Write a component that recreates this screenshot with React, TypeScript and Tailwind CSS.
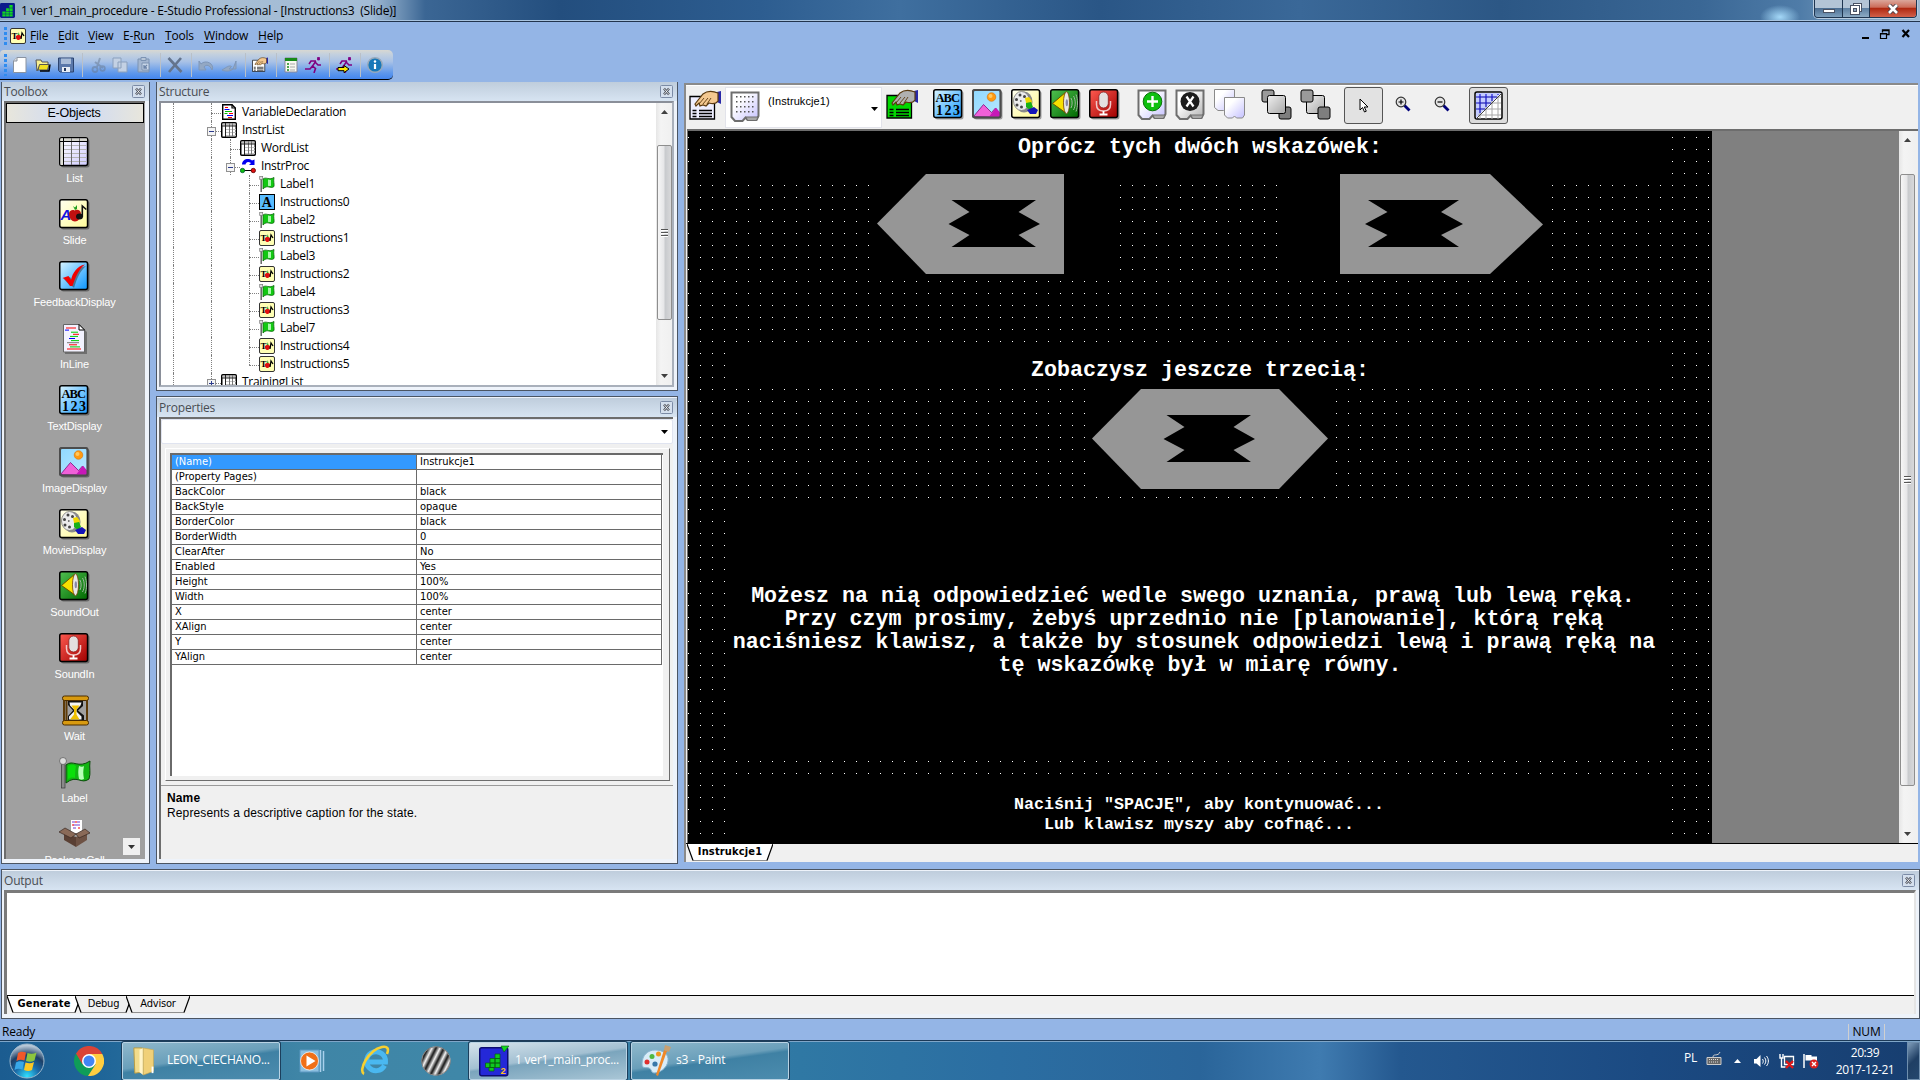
import React from "react";

type IconProps = { className?: string };
const UI = "font-['Open_Sans','Noto_Sans',sans-serif]";
const ARIAL = "font-['Liberation_Sans',sans-serif]";
const TAHOMA = "font-['DejaVu_Sans_Condensed','DejaVu_Sans',sans-serif]";

/* ---------- Object icons, 31 x 31 grid ---------- */

function Frame({ id, from, to, children, className = "size-[31px]", stroke = "#000" }: { id: string; from: string; to: string; children: React.ReactNode; className?: string; stroke?: string }) {
  return (
    <svg viewBox="0 0 31 31" className={className}>
      <defs>
        <linearGradient id={id} x1="0" y1="0" x2="1" y2="1">
          <stop offset="0" stopColor={from} />
          <stop offset="1" stopColor={to} />
        </linearGradient>
      </defs>
      <rect x="2" y="2" width="28.5" height="28.5" rx="2.5" fill="#000" opacity=".35" />
      <rect x=".75" y=".75" width="27.8" height="27.8" rx="2" fill={`url(#${id})`} stroke={stroke} strokeWidth="1.5" />
      {children}
    </svg>
  );
}

function ListIcon({ className }: IconProps) {
  return (
    <Frame id="g-list" from="#ffffff" to="#d0ccff" className={className}>
      <path d="M1.500 1.500H28V4.500H1.500z" fill="#d4d4cc" />
      <path d="M1.500 1.500H4.500V28H1.500z" fill="#e0e0d8" />
      <path d="M5 8.500H28M5 12.500H28M5 16.500H28M5 20.500H28M5 24.500H28" stroke="#b4b4b4" />
      <path d="M12.500 1V28M20.500 1V28" stroke="#6a6a6a" />
      <path d="M1 4.500H28M4.500 1V28" stroke="#000" />
    </Frame>
  );
}

function SlideIcon({ className }: IconProps) {
  return (
    <Frame id="g-slide" from="#fffff0" to="#fffb98" className={className}>
      <text x="1.500" y="20.500" className="font-['Liberation_Sans']" fontWeight="bold" fontStyle="italic" fontSize="15" fill="#1414e0">A</text>
      <path d="M10 15c0-4 4-4.500 5.500-3.500C18 10 22 11 22 15s-3 7.500-6 7.500-6-3-6-7.500z" fill="#c01010" />
      <path d="M16 11l-2-4 2 1.500L18 6v4z" fill="#20a020" />
      <ellipse cx="20.500" cy="17.500" rx="3.500" ry="3" fill="#111" />
      <path d="M23.300 18V7l4 3.500" fill="none" stroke="#111" strokeWidth="1.600" />
    </Frame>
  );
}

function FeedbackIcon() {
  return (
    <Frame id="g-fb" from="#d8f4ff" to="#0a96ff">
      <path d="M5 18l6-2 2.500 4C15 13 19 6 27 5c-6 5-9 12-12 22-1-1.500-2-2-3.500-2C9 23 7 20 5 18z" fill="#333" opacity=".5" />
      <path d="M3.500 17l6-2 2.500 4C13.500 12 18 5 26 3.500 20 8 17 15 13.500 25H11C8.500 21 6 18 3.500 17z" fill="#f20000" />
    </Frame>
  );
}

function InlineIcon() {
  const rows = [
    [4, 10, "#f00"], [3, 4, "#00f"], [9, 7, "#0c0"], [11, 6, "#f00"], [8, 8, "#0c0"], [7, 6, "#00f"], [9, 8, "#0c0"],
    [5, 12, "#777"], [7, 8, "#f00"], [8, 10, "#0c0"], [5, 14, "#f00"],
  ] as const;
  return (
    <svg viewBox="0 0 31 31" className="size-[31px]">
      <path d="M6 3h16l6 6v22H6z" fill="#000" opacity=".3" />
      <path d="M4.500 1.500h16l5 5V29h-21z" fill="#f3f2ff" stroke="#666" />
      <path d="M20 1.500l5.500 5.500H20z" fill="#fff" stroke="#000" />
      {rows.map(([x, w, c], i) => (
        <rect key={i} x={3 + x} y={4.500 + i * 2.100} width={Math.min(w, 20 - x)} height="1" fill={c} />
      ))}
    </svg>
  );
}

function TextIcon() {
  return (
    <Frame id="g-text" from="#d8f4ff" to="#1a9cff">
      <text x="2.500" y="13" textLength="24.500" className="font-['Liberation_Serif']" fontWeight="bold" fontSize="12.500">ABC</text>
      <text x="3" y="26" textLength="24" className="font-['Liberation_Serif']" fontWeight="bold" fontSize="14">123</text>
    </Frame>
  );
}

function ImageIcon() {
  return (
    <Frame id="g-img" from="#8fd8ff" to="#b8e8ff" stroke="#555">
      <path d="M1.500 27.500l10-12 8 8 4-4.500 5 6v3z" fill="#f060d8" stroke="#7a1078" strokeWidth=".8" />
      <path d="M17 27.800l7-9 4.500 5.500v3.500z" fill="#c818b8" />
      <circle cx="19.500" cy="8" r="4.300" fill="#ff9a10" stroke="#d87000" strokeWidth=".6" />
      <circle cx="18.500" cy="7" r="2" fill="#ffc860" />
      <rect x="1" y="1" width="27.500" height="27.500" rx="2" fill="none" stroke="#4c4c4c" strokeWidth="2" />
    </Frame>
  );
}

function MovieIcon() {
  return (
    <Frame id="g-mov" from="#fffff0" to="#fff890">
      <ellipse cx="13" cy="13" rx="8.500" ry="10.500" fill="#8a8a8a" />
      <ellipse cx="10.500" cy="12" rx="8" ry="9.500" fill="#ececec" stroke="#777" strokeWidth=".8" />
      <circle cx="9" cy="6" r="1.500" fill="#444" /><circle cx="13.500" cy="7.500" r="1.500" fill="#444" />
      <circle cx="5.500" cy="10.500" r="1.500" fill="#444" /><circle cx="6" cy="16" r="1.500" fill="#444" />
      <circle cx="10.500" cy="18" r="1.500" fill="#444" /><circle cx="9.800" cy="12" r=".9" fill="#666" />
      <path d="M14 9l4-1 3 4-1 3-5-1z" fill="#f0d800" />
      <path d="M15 14l5-1 2 5-3 3-4-3z" fill="#18b018" />
      <path d="M16 21l7-3 4 3-2 4h-6z" fill="#1414b8" />
    </Frame>
  );
}

function SoundOutIcon() {
  return (
    <Frame id="g-so" from="#50c050" to="#006800">
      <path d="M2.500 14.500L16 3v21z" fill="#f8e000" stroke="#6b5200" />
      <ellipse cx="16.500" cy="13.800" rx="3" ry="11" fill="#e8e8e8" stroke="#704000" strokeWidth=".8" />
      <ellipse cx="16.800" cy="13.800" rx="1.200" ry="3.500" fill="#8888a8" />
      <path d="M21 9c1.500 3 1.500 7 0 10M23.500 7c2.300 4 2.300 10 0 14M26 5.500c2 5 2 12 0 17" fill="none" stroke="#a0b8a0" />
    </Frame>
  );
}

function SoundInIcon() {
  return (
    <Frame id="g-si" from="#ff5a50" to="#a00000">
      <rect x="9.800" y="3" width="9.500" height="16" rx="4.700" fill="#e4e0e0" stroke="#8a2020" strokeWidth=".8" />
      <path d="M7.500 12v3.500c0 5 3 6.500 7 6.500s7-1.500 7-6.500V12" fill="none" stroke="#f0c8c8" strokeWidth="1.500" />
      <path d="M14.500 22v3.500M10.500 25.500h8" stroke="#fff" strokeWidth="1.800" />
    </Frame>
  );
}

function WaitIcon() {
  return (
    <svg viewBox="0 0 31 31" className="size-[31px]">
      <path d="M5 5v22M28 5v22M7.500 5v22" stroke="#5c3a08" strokeWidth="2" />
      <path d="M9 6h15v5l-5 4.500 6 5V26H9v-5l5-5.500L9 10z" fill="#111" />
      <path d="M10.500 7.500h12l-1 3-4 4v2l5 5v3H10v-3l5-5v-2l-4-4z" fill="#f4f4f4" />
      <path d="M12.500 10.500h8l-3 4v5l3 5h-9.500l4-5v-5z" fill="#f0c000" />
      <rect x="3.500" y="1" width="26" height="4.500" rx="2" fill="#d89a10" stroke="#4a2c00" />
      <rect x="3.500" y="25.500" width="26" height="4.500" rx="2" fill="#d89a10" stroke="#4a2c00" />
    </svg>
  );
}

function FlagIcon({ className = "size-[32px]" }: IconProps) {
  return (
    <svg viewBox="0 0 32 32" className={className}>
      <path d="M7 8c7-6 12 4 24-4-1 7 1 12-1 18-8 6-12-5-23 4z" fill="#12b412" stroke="#0a4a0a" />
      <path d="M9 9c3-2 6-1 8 0-1 5-1 9-1 12-3-1-5 0-7 1z" fill="#0ae00a" />
      <path d="M20 9c2 1 4 1 5 0-1 5-1 8 0 13-2 1-3 1-5 0-1-5-1-9 0-13z" fill="#b8ffb8" />
      <rect x="2.500" y="6" width="3.500" height="25" fill="#8a8a8a" stroke="#3a3a3a" strokeWidth=".7" />
      <circle cx="4" cy="4" r="3.500" fill="#ddd" stroke="#555" strokeWidth=".7" />
    </svg>
  );
}

function MiniFlag() {
  return (
    <svg viewBox="0 0 16 16" className="size-4">
      <path d="M4 3c3-2.500 6 1.500 11-1.500-.8 4 .5 6 0 9-3.500 3-6.500-2.500-11 2.500z" fill="#12c812" stroke="#0a6a0a" strokeWidth=".8" />
      <path d="M9 3.500c1.500.6 2.500.6 3 .2v6c-1 .4-2 .3-3 0z" fill="#a8f8a8" />
      <path d="M2.200 3v13" stroke="#666" strokeWidth="1.500" />
      <rect x=".7" y=".5" width="3" height="3" fill="#ddd" stroke="#777" strokeWidth=".7" />
    </svg>
  );
}

function PackageIcon() {
  return (
    <svg viewBox="0 0 31 31" className="size-[31px]">
      <path d="M12 1h11v13H12z" fill="#fff" />
      <path d="M13 3h3M18 3h3M14 6h7M14 9h3" stroke="#a07be0" strokeWidth="1.300" />
      <path d="M16 3h2M13 6h2M19 9h2" stroke="#ff5050" strokeWidth="1.300" />
      <path d="M5 14l12 4v10L5 21z" fill="#5a4034" />
      <path d="M17 18l11-4v7l-11 7z" fill="#6e5244" />
      <path d="M0 13l6-4 11 6-5 4zM17 15l9-5 5 4-11 5z" fill="#8a6a58" stroke="#3a2a22" strokeWidth=".7" />
    </svg>
  );
}

/* ---------- Small 16 px icons ---------- */

function MiniSlide({ className = "size-4" }: IconProps) {
  return (
    <svg viewBox="0 0 16 16" className={className}>
      <rect x=".5" y=".5" width="15" height="15" rx="1.500" fill="#ffffb4" stroke="#333" />
      <text x="1.500" y="11" className="font-['Liberation_Serif']" fontWeight="bold" fontSize="9">T</text>
      <path d="M6 8c1-1.500 4-1.500 5 0s-1 4-2.500 4S5 10 6 8z" fill="#e01010" />
      <path d="M8 7l.8-3 .7 3z" fill="#18a018" />
      <path d="M11 11l1-6 2 3" fill="none" stroke="#000" strokeWidth="1.300" />
    </svg>
  );
}
function MiniText() {
  return (
    <svg viewBox="0 0 16 16" className="size-4">
      <rect x=".5" y=".5" width="15" height="15" fill="#58bcff" stroke="#000" />
      <text x="2.700" y="13" className="font-['Liberation_Serif']" fontWeight="bold" fontSize="14">A</text>
    </svg>
  );
}
function MiniList() {
  return (
    <svg viewBox="0 0 16 16" className="size-4">
      <rect x=".75" y=".75" width="14.500" height="14.500" rx="1" fill="#fff" stroke="#000" strokeWidth="1.500" />
      <path d="M1.500 1.500h13v2h-13z" fill="#c0c0c0" />
      <path d="M4 7.500h11M4 10.500h11M4 13.500h11" stroke="#c4c4c4" />
      <path d="M8.500 1v14M11.500 1v14" stroke="#777" />
      <path d="M1 4h14M4.500 1v14" stroke="#222" />
    </svg>
  );
}
function MiniInline() {
  return (
    <svg viewBox="0 0 16 16" className="size-4">
      <path d="M1.700.7h9.300l3.300 3.300v11.300H1.700z" fill="#fff" stroke="#000" strokeWidth="1.400" />
      <path d="M11 .5V4h3.500" fill="none" stroke="#000" strokeWidth="1.200" />
      <path d="M4 3.500h3M8 9.500h4M7 13.500h4" stroke="#f00" />
      <path d="M3.500 5.500h5M6 11.500h6" stroke="#00f" />
      <path d="M4 7.500h7M3.500 9.500h3" stroke="#0b0" />
    </svg>
  );
}
function MiniProc() {
  return (
    <svg viewBox="0 0 16 16" className="size-4">
      <path d="M2 6.500c0-5 6-7 10-4l2.500-1V7H9l2-2C8 3 6 4 5.500 6.500z" fill="#0000f0" />
      <path d="M4 12.500h8" stroke="#000" />
      <circle cx="2.500" cy="12.500" r="2.200" fill="#10c010" stroke="#053" strokeWidth=".8" />
      <circle cx="13.300" cy="12.500" r="2.200" fill="#e01010" stroke="#500" strokeWidth=".8" />
    </svg>
  );
}

function CloseBox() {
  return (
    <svg viewBox="0 0 13 13" className="size-[13px]">
      <rect x=".5" y=".5" width="12" height="12" rx="1" fill="#d5e0ee" stroke="#7b8ba6" />
      <path d="M4 3.500l5 6M9 3.500l-5 6" stroke="#4a505c" strokeWidth="2.400" />
      <path d="M4 3.500l5 6M9 3.500l-5 6" stroke="#fff" strokeWidth=".8" />
    </svg>
  );
}
function Caret({ className = "w-[7px]" }: IconProps) {
  return (
    <svg viewBox="0 0 7 4" className={className}>
      <path d="M0 0h7L3.500 4z" fill="currentColor" />
    </svg>
  );
}

/* ---------- Title, menu, toolbar ---------- */

function AppLogo({ className }: IconProps) {
  return (
    <svg viewBox="0 0 16 16" className={className}>
      <rect width="16" height="16" rx="1.500" fill="#0c1a8c" />
      <path d="M10 2h3.500v3H10zM6.500 5.500h3v3h-3zM10 5.500h3.500v3H10zM2.500 9h3.500v2.500H2.500zM6.500 9h3v2.500h-3zM10 9h3.500v2.500H10zM2.500 12h3.500v2.500H2.500zM6.500 12h3v2.500h-3zM10 12h3.500v2.500H10z" fill="#10d820" />
    </svg>
  );
}

function BigLogo() {
  return (
    <svg viewBox="0 0 31 32" className="mr-[5px] h-[32px] w-[31px]">
      <rect x=".75" y="2.750" width="28" height="28" rx="2" fill="#2428d8" stroke="#0c0c70" strokeWidth="1.500" />
      <path d="M22 1h8l-5 6z" fill="#10d820" stroke="#086010" strokeWidth=".6" />
      <g fill="#10c820" stroke="#065c10" strokeWidth=".7">
        <path d="M16 9h5v4.500h-5zM11 13.500h5V18h-5zM16 13.500h5V18h-5zM6.500 18H11v4.500H6.500zM11 18h5v4.500h-5zM16 18h5v4.500h-5zM10 22.500h5V26h-5z" />
      </g>
      <text x="21.500" y="29" className="font-['Liberation_Sans']" fontWeight="bold" fontSize="9.500" fill="#ffc020">2</text>
    </svg>
  );
}

function TitleBar() {
  return (
    <div className={`flex h-[22px] shrink-0 items-start overflow-hidden border-b border-[#22344e] bg-[radial-gradient(ellipse_20px_12px_at_1780px_17px,#a4d8f8,transparent),linear-gradient(90deg,#8fa9c4_0px,#a9bfd4_60px,#a3bcd6_370px,#6d90b4_400px,#3b6694_425px,#234e7e_560px,#2d5d90_760px,#3f6f9f_900px,#2a5686_1100px,#3a6898_1300px,#2c5785_1500px,#3a6795_1700px,#4f7ca8_1800px,#9db9d2_1920px)] shadow-[inset_0_-1px_0_#a9c4e0] ${UI}`}>
      <AppLogo className="mt-[3px] size-[15px]" />
      <span className="ml-[6px] mt-[2px] whitespace-pre text-[12px] leading-[18px] tracking-[-0.22px] text-black">1 ver1_main_procedure - E-Studio Professional - [Instructions3  (Slide)]</span>
      <div className="ml-auto mr-[3px] flex h-[18px] overflow-hidden rounded-b-[4px] border border-t-0 border-[#1f3550] shadow-[0_0_0_1px_#b8cce0]">
        <div className="flex w-[28px] items-center justify-center border-r border-[#1f3550] bg-[linear-gradient(#b3c4d6_45%,#4d6f93_50%,#7d9fbd)]">
          <div className="mt-1 h-[4px] w-[12px] border border-[#4a5264] bg-white" />
        </div>
        <div className="flex w-[27px] items-center justify-center border-r border-[#1f3550] bg-[linear-gradient(#b3c4d6_45%,#5f81a3_50%,#8caac4)]">
          <svg viewBox="0 0 12 12" className="size-[12px]">
            <rect x="3.500" y=".5" width="8" height="8" fill="#fff" stroke="#4a5264" />
            <rect x=".5" y="2.500" width="9" height="9" fill="#fff" stroke="#4a5264" />
            <rect x="3.500" y="5.500" width="3" height="3" fill="#8fa6c0" stroke="#4a5264" />
          </svg>
        </div>
        <div className="flex w-[46px] items-center justify-center bg-[linear-gradient(#dba79b_0%,#cc6d5a_42%,#b02a12_50%,#d2604a_100%)]">
          <svg viewBox="0 0 12 10" className="h-[10px] w-[12px]">
            <path d="M2 1l8 8M10 1L2 9" stroke="#4a4048" strokeWidth="4.400" />
            <path d="M2 1l8 8M10 1L2 9" stroke="#fff" strokeWidth="2.600" />
          </svg>
        </div>
      </div>
    </div>
  );
}

function MenuBar() {
  const items: [string, string, string, string][] = [
    ["", "F", "ile", "w-[28px]"], ["", "E", "dit", "w-[30px]"], ["", "V", "iew", "w-[35px]"], ["E-", "R", "un", "w-[42px]"],
    ["", "T", "ools", "w-[39px]"], ["", "W", "indow", "w-[54px]"], ["", "H", "elp", "w-[30px]"],
  ];
  return (
    <div className={`flex h-[28px] shrink-0 items-center text-[12px] tracking-[-0.2px] text-black ${UI}`}>
      <div className="ml-[4px] h-[18px] w-[3px] bg-[repeating-linear-gradient(#2f8cf0_0_3px,transparent_3px_5px)]" />
      <MiniSlide className="ml-[3px] size-4" />
      <div className="ml-[4px] flex">
        {items.map(([pre, key, rest, w]) => (
          <span key={key} className={`${w} whitespace-nowrap`}>{pre}<u className="underline-offset-2">{key}</u>{rest}</span>
        ))}
      </div>
      <svg viewBox="0 0 50 10" className="mb-[4px] ml-auto mr-[9px] h-[10px] w-[50px]">
        <path d="M1 9h7" stroke="#000" strokeWidth="2" />
        <path d="M21.500 3.500V1h6.500v4.500h-2M21 1.500h7" fill="none" stroke="#000" strokeWidth="1.300" />
        <path d="M19.500 4.500h6v5h-6zM19 5h7" fill="none" stroke="#000" strokeWidth="1.200" />
        <path d="M41.500 1l6.500 7M48 1l-6.500 7" stroke="#000" strokeWidth="2.200" />
      </svg>
    </div>
  );
}

function Sep({ className = "" }: IconProps) {
  return <div className={`h-[24px] w-px bg-[#b9c0c8] ${className}`} />;
}

function Runner() {
  return (
    <g fill="none" stroke="#800080" strokeWidth="1.600">
      <path d="M12.500 .5h2v2.500h-2z" fill="#800080" strokeWidth=".8" />
      <path d="M11 4L7.500 9l3 2.500L9 16M7.500 9l-2.500 3H0M11 4H6L4 7M10.500 5.500L13 8h3" />
    </g>
  );
}

function HandSheet({ paper, skin }: { paper: string; skin: string }) {
  return (
    <g>
      <path d="M1 6.500h24.500V29H1z" fill={paper} stroke="#000" strokeWidth="1.300" />
      <path d="M3.500 20.500h4M10 20.500h13M3.500 23.500h4M10 23.500h13M3.500 26.500h4M10 26.500h13" stroke="#000" strokeWidth="1.400" />
      <path d="M28 2l4-1v13l-4-2z" fill="#2828a8" />
      <path d="M6 14L14 4c5-4 10-3 15-1v8c-2 3-6 3-9 2l-3 3-3-1-3 1-1-3-3 3z" fill={skin} stroke="#5a3a10" strokeWidth="1.200" />
      <path d="M10 14l5-6M14 14l5-6M18 14l4-6" stroke="#5a3a10" strokeWidth=".9" />
    </g>
  );
}

function Toolbar() {
  const ico = "size-4 shrink-0";
  return (
    <div className="h-[32px] shrink-0">
      <div className="flex h-[30px] w-[393px] items-center rounded-r-[5px] rounded-tl-[4px] border-b border-black bg-[linear-gradient(#d8d8d2_0%,#c3d0de_15%,#a9c2e6_40%,#5d97ec_80%,#4486ee_100%)] pl-[4px]">
        <div className="h-[22px] w-[3px] bg-[repeating-linear-gradient(#2f8cf0_0_3px,transparent_3px_5px)]" />
        <svg viewBox="0 0 16 16" className={`${ico} ml-[5px]`}><path d="M5 .5h9v15H1.500V4z" fill="#fff" stroke="#8a93a0" /><path d="M5 .5V4H1.500" fill="#ddd" stroke="#8a93a0" /></svg>
        <svg viewBox="0 0 16 16" className={`${ico} ml-[7px]`}><path d="M1 3h5l1 2h6v3H5l-3 6z" fill="#f8f090" stroke="#555" /><path d="M4.500 7.500H14L12.500 13H3z" fill="#f0e020" stroke="#555" /><path d="M15 7.500l-1 6.500H5" fill="none" stroke="#000" strokeWidth="1.500" /></svg>
        <svg viewBox="0 0 16 16" className={`${ico} ml-[7px]`}><path d="M.5 1h15v14H2L.5 13.500z" fill="#5a78aa" stroke="#2c4470" /><path d="M3 1.500h10V7H3z" fill="#a9bcd8" /><path d="M4 10h8v5H4z" fill="#e8eef6" /><path d="M6 11h2v3H6z" fill="#22365e" /></svg>
        <Sep className="ml-[8px]" />
        <svg viewBox="0 0 16 16" className={`${ico} ml-[7px] opacity-50`}><path d="M10 1L7 10M5 5l8 6" stroke="#68798f" strokeWidth="2" /><circle cx="5" cy="12.500" r="2.500" fill="none" stroke="#68798f" strokeWidth="1.800" /><circle cx="12.500" cy="11.500" r="2.300" fill="none" stroke="#68798f" strokeWidth="1.800" /></svg>
        <svg viewBox="0 0 16 16" className={`${ico} ml-[6px]`}><path d="M1 1h8v10H1zM6 5h9v10H6z" fill="#c3d1e4" stroke="#8ba0bc" /></svg>
        <svg viewBox="0 0 16 16" className={`${ico} ml-[8px]`}><path d="M2 2h11v13H2z" fill="#a3b6d0" stroke="#7c93b2" /><path d="M5 .5h5v3H5z" fill="#b8c6d8" stroke="#7c93b2" /><path d="M6 6h7v7H6z" fill="#c8d6e8" stroke="#7c93b2" /><path d="M8 11l3-3M8 8v3h3" stroke="#6c84a8" strokeWidth="1.300" fill="none" /></svg>
        <Sep className="ml-[8px]" />
        <svg viewBox="0 0 16 16" className={`${ico} ml-[6px]`}><path d="M1.500 1l13 14M14 1L2 15" stroke="#64748c" strokeWidth="2.600" /></svg>
        <Sep className="ml-[8px]" />
        <svg viewBox="0 0 16 16" className={`${ico} ml-[6px]`}><path d="M1 4v9h7l-2-3c2-3 6-2 8 3 3-6-6-11-11-6z" fill="#93a8c4" stroke="#7f97b8" /></svg>
        <svg viewBox="0 0 16 16" className={`${ico} ml-[7px]`}><path d="M15 4v8H8l2.500-2.500C8 8 6 10 1 13c4 2 9 1 11-1z" fill="#93a8c4" stroke="#7f97b8" /></svg>
        <Sep className="ml-[8px]" />
        <svg viewBox="0 0 32 32" className={`${ico} ml-[6px]`}><HandSheet paper="#fff" skin="#f4c890" /></svg>
        <Sep className="ml-[8px]" />
        <svg viewBox="0 0 16 16" className={`${ico} ml-[6px]`}><path d="M2 1h12v14H2z" fill="#f8f8f0" stroke="#889" /><path d="M2 1h12v3H2z" fill="#188a18" /><path d="M4 7h2M4 10h2M4 13h2" stroke="#188a18" strokeWidth="1.500" /><path d="M7 7h5M7 10h5M7 13h5" stroke="#aaa" /></svg>
        <svg viewBox="0 0 16 16" className={`${ico} ml-[6px]`}><Runner /></svg>
        <Sep className="ml-[8px]" />
        <svg viewBox="0 0 16 16" className={`${ico} ml-[6px]`}><Runner /><path d="M2 10.500h6V8.500l5 3.500-5 3.700v-2H2z" fill="#ffe800" stroke="#000" /></svg>
        <Sep className="ml-[8px]" />
        <svg viewBox="0 0 16 16" className={`${ico} ml-[6px]`}><circle cx="8" cy="8" r="7.300" fill="#1878b8" stroke="#9ab" strokeWidth="1.400" /><path d="M8 7v5" stroke="#fff" strokeWidth="2.200" /><circle cx="8" cy="4.500" r="1.200" fill="#fff" /></svg>
      </div>
    </div>
  );
}

/* ---------- Docked panels ---------- */

function Panel({ title, flush, className = "", children }: { title: string; flush?: boolean; className?: string; children: React.ReactNode }) {
  return (
    <section className={`flex shrink-0 flex-col border border-[#4b5563] bg-[#eef3fa] ${flush ? "border-t-0" : "pt-px"} ${className}`}>
      <header className="flex h-[19px] shrink-0 items-center bg-[linear-gradient(#bfcddc,#d7e4f2)] pl-[2px] pr-[4px]">
        <h2 className={`text-[12px] leading-[18px] tracking-[-0.2px] text-[#484c52] ${UI}`}>{title}</h2>
        <div className="ml-auto"><CloseBox /></div>
      </header>
      {children}
    </section>
  );
}

const tools: [string, React.ReactNode][] = [
  ["List", <ListIcon />], ["Slide", <SlideIcon />], ["FeedbackDisplay", <FeedbackIcon />], ["InLine", <InlineIcon />],
  ["TextDisplay", <TextIcon />], ["ImageDisplay", <ImageIcon />], ["MovieDisplay", <MovieIcon />], ["SoundOut", <SoundOutIcon />],
  ["SoundIn", <SoundInIcon />], ["Wait", <WaitIcon />], ["Label", <FlagIcon className="-mb-px h-[32px] w-[32px]" />], ["PackageCall", <PackageIcon />],
];

function Toolbox() {
  return (
    <Panel title="Toolbox" flush className="w-[149px]">
      <div className="relative mb-[4px] ml-[2px] mr-[4px] flex min-h-0 flex-1 flex-col overflow-hidden border-2 border-b-0 border-r-0 border-[#6d6d6d] bg-[#a0a0a0]">
        <div className={`mr-px flex h-[20px] shrink-0 items-center justify-center border border-black bg-[linear-gradient(90deg,#e8e6dc,#ccd9f6_50%,#e8e6dc)] pr-[2px] text-[12.500px] tracking-[-0.2px] text-black ${ARIAL}`}>E-Objects</div>
        <div className="flex flex-col items-center pr-[2px] pt-[14px]">
          {tools.map(([name, icon]) => (
            <div key={name} className="flex h-[62px] shrink-0 flex-col items-center">
              {icon}
              <span className={`mt-[3px] text-[11px] leading-[14px] tracking-[-0.15px] text-white ${ARIAL}`}>{name}</span>
            </div>
          ))}
        </div>
        <div className="absolute bottom-[4px] right-[5px] flex h-[17px] w-[17px] items-center justify-center bg-[#f0f0f0] text-[#333]"><Caret /></div>
      </div>
    </Panel>
  );
}

type Node = { name: string; level: 0 | 1 | 2; icon: React.ReactNode; toggle?: "-" | "+" };
const nodes: Node[] = [
  { name: "VariableDeclaration", level: 0, icon: <MiniInline /> },
  { name: "InstrList", level: 0, icon: <MiniList />, toggle: "-" },
  { name: "WordList", level: 1, icon: <MiniList /> },
  { name: "InstrProc", level: 1, icon: <MiniProc />, toggle: "-" },
  { name: "Label1", level: 2, icon: <MiniFlag /> },
  { name: "Instructions0", level: 2, icon: <MiniText /> },
  { name: "Label2", level: 2, icon: <MiniFlag /> },
  { name: "Instructions1", level: 2, icon: <MiniSlide /> },
  { name: "Label3", level: 2, icon: <MiniFlag /> },
  { name: "Instructions2", level: 2, icon: <MiniSlide /> },
  { name: "Label4", level: 2, icon: <MiniFlag /> },
  { name: "Instructions3", level: 2, icon: <MiniSlide /> },
  { name: "Label7", level: 2, icon: <MiniFlag /> },
  { name: "Instructions4", level: 2, icon: <MiniSlide /> },
  { name: "Instructions5", level: 2, icon: <MiniSlide /> },
  { name: "TrainingList", level: 0, icon: <MiniList />, toggle: "+" },
];

const V = "border-l border-dotted border-[#808080]";

function TreeRow({ node, last }: { node: Node; last?: boolean }) {
  const { level, name, icon, toggle } = node;
  return (
    <div className="flex h-[18px] shrink-0 items-center">
      <div className={`ml-[12px] h-full w-[38px] ${V}`} />
      <div className={`h-full w-[19px] shrink-0 ${V}`} hidden={level === 0} />
      {level === 2 && <div className="h-full w-[19px] shrink-0" />}
      <div className="relative h-full w-[10px] shrink-0">
        <div className={`w-px ${last ? "h-[10px]" : "h-full"} ${V}`} />
        <div className="absolute left-0 top-[10px] w-[10px] border-t border-dotted border-[#808080]" />
        {toggle && (
          <div className="absolute -left-[4px] top-[6px] flex size-[9px] items-center justify-center border border-[#919191] bg-[#f4f4f4]">
            <div className="absolute h-px w-[5px] bg-[#2b3a8c]" />
            {toggle === "+" && <div className="absolute h-[5px] w-px bg-[#2b3a8c]" />}
          </div>
        )}
      </div>
      {icon}
      <span className={`ml-[5px] text-[12px] leading-[18px] tracking-[-0.3px] text-black ${UI}`}>{name}</span>
    </div>
  );
}

function Grip() {
  return <div className="h-[8px] w-[7px] bg-[repeating-linear-gradient(#555_0_1px,#fff_1px_2px,transparent_2px_3px)]" />;
}

function ScrollBar({ thumb, className = "" }: { thumb: string; className?: string }) {
  return (
    <div className={`flex w-[16px] shrink-0 flex-col items-center bg-[linear-gradient(90deg,#e6e6e6,#f4f4f4_30%,#f0f0f0)] text-[#404040] ${className}`}>
      <Caret className="mt-[7px] h-[4px] w-[7px] rotate-180" />
      <div className={`flex w-[15px] items-center justify-center rounded-[2px] border border-[#8e8e8e] bg-[linear-gradient(90deg,#f6f6f6,#e6e6e8_45%,#c8cacd_55%,#d8d8da)] ${thumb}`}><Grip /></div>
      <Caret className="mb-[7px] mt-auto h-[4px] w-[7px]" />
    </div>
  );
}

function Structure() {
  return (
    <Panel title="Structure" flush className="h-[309px]">
      <div className="mb-[3px] ml-[2px] mr-[3px] flex min-h-0 flex-1 overflow-hidden border-2 border-[#8a8f99] border-b-[#a9b0bb] border-r-[#a9b0bb] bg-white">
        <div className="flex flex-1 flex-col overflow-hidden">
          {nodes.map((n, i) => <TreeRow key={n.name} node={n} last={i === 14} />)}
        </div>
        <ScrollBar thumb="mt-[31px] h-[175px]" />
      </div>
    </Panel>
  );
}

const props: [string, string][] = [
  ["(Name)", "Instrukcje1"], ["(Property Pages)", ""], ["BackColor", "black"], ["BackStyle", "opaque"], ["BorderColor", "black"],
  ["BorderWidth", "0"], ["ClearAfter", "No"], ["Enabled", "Yes"], ["Height", "100%"], ["Width", "100%"], ["X", "center"],
  ["XAlign", "center"], ["Y", "center"], ["YAlign", "center"],
];

function Properties() {
  return (
    <Panel title="Properties" className="h-[468px]">
      <div className="mb-[4px] ml-[2px] mr-[4px] flex min-h-0 flex-1 flex-col border-l-2 border-t-2 border-[#6d6d6d] bg-[#f0f0f0]">
        <div className="flex h-[25px] w-[512px] shrink-0 items-center justify-end rounded-[2px] border border-[#e0e4f0] bg-white pr-[4px] text-black"><Caret /></div>
        <div className="ml-[4px] mt-[4px] h-[333px] w-[505px] border-b border-l border-r border-t border-b-[#6d6d6d] border-l-white border-r-[#6d6d6d] border-t-white p-[4px]">
          <div className={`h-[323px] w-[493px] border-l-2 border-t-2 border-[#6a6a6a] bg-white text-[11px] text-black ${TAHOMA}`}>
            {props.map(([k, v], i) => (
              <div key={k} className="flex h-[15px] w-[490px] border-b border-r border-[#6a6a6a] leading-[14px]">
                <div className={`w-[245px] border-r border-[#6a6a6a] pl-[3px] ${i === 0 ? "bg-[#3399ff] text-white" : ""}`}>{k}</div>
                <div className="pl-[3px]">{v}</div>
              </div>
            ))}
          </div>
        </div>
        <div className={`mt-[4px] flex-1 border-t border-[#9a9a9a] pl-[6px] pt-[5px] text-[12px] leading-[15px] tracking-[0.13px] text-black ${ARIAL}`}>
          <div className="font-bold">Name</div>
          <div>Represents a descriptive caption for the state.</div>
        </div>
      </div>
    </Panel>
  );
}

/* ---------- Slide editor ---------- */

function TabSheet({ id, mark }: { id: string; mark?: "plus" | "x" | "dots" }) {
  return (
    <svg viewBox="0 0 31 31" className="size-[31px]">
      <defs>
        <linearGradient id={id} x1="0" y1="0" x2="1" y2="1">
          <stop offset=".3" stopColor="#fff" /><stop offset="1" stopColor={mark === "x" ? "#b0b0b0" : "#c4c0ff"} />
        </linearGradient>
      </defs>
      <path d="M1.500 1.500h27V25l-2 4h-9l-2-2.500-3 3.500H5l-3.500-4z" fill={`url(#${id})`} stroke="#6e6e6e" strokeWidth="2" />
      <path d="M16 26h12l-1.500 3.500h-9z" fill="#a8a8a8" stroke="#6e6e6e" />
      {mark === "dots" && [0, 1, 2, 3].map((r) => [0, 1, 2, 3, 4].map((c) => <rect key={`${r}${c}`} x={6 + c * 4} y={5 + r * 5} width="1.500" height="1.500" fill="#555" />))}
      {mark === "plus" && (<><circle cx="15.500" cy="12.500" r="9.300" fill="#0fc00f" stroke="#087008" /><path d="M15.500 7v11M10 12.500h11" stroke="#fff" strokeWidth="2.400" /></>)}
      {mark === "x" && (<><circle cx="15" cy="12.500" r="9.500" fill="#1c1c1c" /><path d="M11.500 7.500l7 10M18.500 7.500l-7 10" stroke="#fff" strokeWidth="2.200" /></>)}
    </svg>
  );
}

function Stack({ front }: { front: boolean }) {
  const small = (
    <>
      <rect x="1" y="1" width="12" height="12" rx="2" fill="#9a9a9a" stroke="#000" />
      <rect x="18" y="18" width="12" height="12" rx="2" fill="#7e7e7e" stroke="#000" />
    </>
  );
  return (
    <svg viewBox="0 0 31 31" className="size-[31px]">
      <defs>
        <linearGradient id="g-stack" x1="0" y1="0" x2="1" y2="1"><stop offset="0" stopColor="#f0f0f0" /><stop offset="1" stopColor="#a8a8a8" /></linearGradient>
      </defs>
      {front && small}
      <rect x="6.500" y="6.500" width="18" height="18" rx="2" fill="url(#g-stack)" stroke="#000" />
      {!front && small}
    </svg>
  );
}

function Magnifier({ plus }: { plus?: boolean }) {
  return (
    <svg viewBox="0 0 16 16" className="size-4">
      <path d="M9.500 9.500l5 5" stroke="#00007a" strokeWidth="2.800" />
      <circle cx="6" cy="6" r="4.800" fill="#e4e4e4" stroke="#333" strokeWidth="1.200" />
      <path d={plus ? "M3.500 6h5M6 3.500v5" : "M3.500 6h5"} stroke="#000" strokeWidth="1.200" />
    </svg>
  );
}

function SlideToolbar() {
  return (
    <div className="flex h-[44px] shrink-0 items-start border-t border-white bg-[#f0f0f0] pl-[3px] pt-[3px]">
      <svg viewBox="0 0 32 32" className="mt-px size-[32px]"><HandSheet paper="#eeeeff" skin="#f4c890" /></svg>
      <div className="-mt-[2px] ml-[4px] flex h-[41px] w-[157px] border border-[#e2e3ea] bg-white">
        <div className="ml-[4px] mt-[3px]"><TabSheet id="g-tab0" mark="dots" /></div>
        <span className={`ml-[7px] mt-[6px] w-[103px] text-[11px] leading-[14px] tracking-[0.1px] text-black ${ARIAL}`}>(Instrukcje1)</span>
        <Caret className="mt-[19px] h-[4px] w-[7px] shrink-0" />
      </div>
      <svg viewBox="0 0 32 32" className="ml-[4px] size-[32px]"><HandSheet paper="#00d800" skin="#b0b0b0" /></svg>
      <div className="ml-[15px] flex gap-[8px]"><TextIcon /><ImageIcon /><MovieIcon /><SoundOutIcon /><SoundInIcon /></div>
      <div className="ml-[17px] flex gap-[7px]"><TabSheet id="g-tab1" mark="plus" /><TabSheet id="g-tab2" mark="x" /></div>
      <svg viewBox="0 0 31 31" className="ml-[8px] size-[31px]">
        <g fill="url(#g-tab1)" stroke="#8a8a8a">
          <path d="M.5.5h20v18h-8l-3 3H4l-3.500-3z" />
          <path d="M10.500 8.500h20V26l-2 3h-6l-2-2-2 2h-5l-3-3z" />
        </g>
      </svg>
      <div className="ml-[16px] flex gap-[8px]"><Stack front /><Stack front={false} /></div>
      <div className="-mt-[2px] ml-[13px] flex h-[37px] w-[39px] items-center justify-center rounded-[3px] border border-[#555] bg-[#e2e2e2]">
        <svg viewBox="0 0 10 15" className="h-[15px] w-[10px]"><path d="M1 1v11l2.500-2.500L5.500 14l1.800-.8-2-4.200H9z" fill="#fff" stroke="#000" /></svg>
      </div>
      <div className="ml-[12px] mt-[7px]"><Magnifier plus /></div>
      <div className="ml-[23px] mt-[7px]"><Magnifier /></div>
      <div className="-mt-[2px] ml-[19px] flex h-[37px] w-[39px] items-center justify-center rounded-[3px] border border-[#555] bg-[#dcdcdc]">
        <svg viewBox="0 0 30 30" className="size-[30px]">
          <rect x="1" y="1" width="27" height="27" rx="2" fill="#fff" stroke="#000" strokeWidth="1.500" />
          <path d="M2 2h25L2 27z" fill="#c4ccff" />
          <path d="M6 28V6M12 28V6M18 28V6M24 28V6M4 24h23M4 18h23M4 12h23M4 6h23" stroke="#a8a8a8" />
          <path d="M6 22V3M12 16V3M18 10V3M24 4V3M2 18h9M2 12h15M2 6h21" stroke="#1010d0" strokeWidth="1.100" />
          <path d="M28 2L2 28" stroke="#444" />
        </svg>
      </div>
    </div>
  );
}

/* Slide canvas: a 12 px dot grid that slide objects cover */
const covers = [
  [38, 0, 946, 53], [182, 0, 250, 149], [590, 0, 270, 149], [38, 222, 946, 30], [398, 222, 246, 140], [38, 376, 946, 248], [38, 654, 946, 60],
];

function Canvas() {
  const slideText = "absolute whitespace-pre text-center font-['Liberation_Mono',monospace] font-bold text-white";
  return (
    <div className="relative w-[1024px] shrink-0 overflow-hidden bg-black">
      <svg viewBox="0 0 1024 712" className="absolute inset-0 h-[712px] w-[1024px]">
        <defs>
          <pattern id="dots" width="12" height="12" patternUnits="userSpaceOnUse"><rect x="0" y="6" width="1" height="1" fill="#fff" /></pattern>
        </defs>
        <rect width="1024" height="712" fill="url(#dots)" />
        {covers.map(([x, y, w, h], i) => <rect key={i} x={x} y={y} width={w} height={h} fill="#000" />)}
        <g fill="#969696">
          <path d="M189 92.500L238 43h138v100H238z" />
          <path d="M652 43h150l53 50.500L802 143H652z" />
          <path d="M404 307.500L453 258h138l49 49.500L591 358H453z" />
        </g>
        <g fill="#000">
          <path d="M263.500 69H348l-17.500 12 21.500 12-21.500 11 17.500 12h-84.500l18-12-21-11 21-12z" />
          <path d="M680 69h91l-18 12 22 12-22 11 18 12h-91l19.500-12-22.500-11 22.500-12z" />
          <path d="M478.500 284H563l-17.500 12 21.500 12-21.500 11 17.500 12h-84.500l18-12-21-11 21-12z" />
        </g>
      </svg>
      <p className={`${slideText} left-[330px] top-[5px] text-[21.670px] leading-[23px]`}>Oprócz tych dwóch wskazówek:</p>
      <p className={`${slideText} left-[343px] top-[228px] text-[21.670px] leading-[23px]`}>Zobaczysz jeszcze trzecią:</p>
      <div className={`${slideText} left-[44px] top-[454px] w-[924px] text-[21.670px] leading-[23px]`}>
        <p className="pr-[2px]">Możesz na nią odpowiedzieć wedle swego uznania, prawą lub lewą ręką.</p>
        <p>Przy czym prosimy, żebyś uprzednio nie [planowanie], którą ręką</p>
        <p>naciśniesz klawisz, a także by stosunek odpowiedzi lewą i prawą ręką na</p>
        <p className="pl-[12px]">tę wskazówkę był w miarę równy.</p>
      </div>
      <p className={`${slideText} left-[326px] top-[664px] w-[370px] text-[16.670px] leading-[20px]`}>{"Naciśnij \"SPACJĘ\", aby kontynuować...\nLub klawisz myszy aby cofnąć..."}</p>
    </div>
  );
}

function SheetTab({ label, active, w, textClass }: { label: string; active?: boolean; w: number; textClass: string }) {
  return (
    <div className={`relative -mr-[6px] flex h-[17px] items-center justify-center ${textClass}`}>
      <svg viewBox={`0 0 ${w} 17`} preserveAspectRatio="none" className="absolute inset-0 h-full w-full">
        <path d={`M0 0l6 16.500H${w - 6}L${w} 0`} fill={active ? "#fff" : "#f0f0f0"} />
        <path d={`M6 16.500H${w - 6}`} stroke="#909090" />
        <path d={`M0 0l6 16.500M${w - 6} 16.500L${w} 0`} stroke="#000" strokeWidth="1.200" />
      </svg>
      <span className="relative">{label}</span>
    </div>
  );
}

function SlideEditor() {
  return (
    <section className="mt-px flex h-[779px] w-[1234px] shrink-0 flex-col border-l-2 border-t-2 border-[#8a8a8a] bg-[#f0f0f0]">
      <SlideToolbar />
      <div className="ml-px flex h-[714px] border-l border-t-2 border-[#6d6d6d]">
        <Canvas />
        <div className="w-[187px] shrink-0 bg-[#808080]" />
        <ScrollBar thumb="mt-[32px] h-[612px]" />
      </div>
      <div className={`flex border-t border-black pl-[1px] text-[11px] font-bold tracking-[0.15px] text-black ${TAHOMA}`}>
        <SheetTab label="Instrukcje1" active w={86} textClass="w-[86px]" />
      </div>
    </section>
  );
}

function Output() {
  return (
    <Panel title="Output" className="ml-px h-[150px]">
      <div className="mb-[4px] ml-[2px] mr-[3px] flex flex-1 flex-col border-[3px] border-b-0 border-r-2 border-[#7a7a7a] border-r-[#e4e4e4] bg-[#f0f0f0]">
        <div className="h-[102px] bg-white" />
        <div className={`flex border-t border-black text-[11px] tracking-[-0.2px] text-black ${TAHOMA}`}>
          <SheetTab label="Generate" active w={74} textClass="w-[74px] font-bold tracking-[0.2px]" />
          <SheetTab label="Debug" w={57} textClass="w-[57px]" />
          <SheetTab label="Advisor" w={64} textClass="w-[64px]" />
        </div>
      </div>
    </Panel>
  );
}

/* ---------- Windows taskbar ---------- */

function TaskButton({ label, active, icon, className }: { label: string; active?: boolean; icon: React.ReactNode; className: string }) {
  return (
    <div className={`flex h-[38px] w-[158px] shrink-0 items-center rounded-[2px] border border-[#b9d3e4] pl-[9px] shadow-[0_0_0_1px_#1c3f5c] ${active ? "bg-[linear-gradient(172deg,#a9c6d6_0%,#7ba5bd_48%,#a3c0d2_53%,#d5e3ec_100%)]" : "bg-[linear-gradient(172deg,#8fb8cc_0%,#6a9fba_45%,#3f81a4_52%,#4c8cae_100%)]"} ${active ? "bg-[linear-gradient(172deg,#d5e3ec_0%,#a3c0d2_45%,#7ba5bd_50%,#a9c6d6_100%)]" : ""} ${className}`}>
      {icon}
      <span className={`pb-px text-[12px] tracking-[-0.2px] text-white ${UI}`}>{label}</span>
    </div>
  );
}

function Taskbar() {
  return (
    <footer className={`flex h-[40px] shrink-0 items-center border-t border-[#1c3a58] bg-[linear-gradient(90deg,#1b5c90_0px,#1f6598_100px,#3f85a6_300px,#3f87a8_460px,#2f78a4_800px,#2b6ea2_1000px,#2a659a_1200px,#3f7bb0_1320px,#24588f_1400px,#1b4a82_1650px,#173e70_1920px)] shadow-[inset_0_1px_0_#7fa6c8] ${UI}`}>
      <svg viewBox="0 0 36 36" className="ml-[9px] size-[36px]">
        <defs><radialGradient id="orb" cx=".5" cy=".95" r=".9"><stop offset="0" stopColor="#30e0ff" /><stop offset=".4" stopColor="#1a6aa8" /><stop offset=".7" stopColor="#1d3f66" /><stop offset="1" stopColor="#b8c8d8" /></radialGradient></defs>
        <circle cx="18" cy="18" r="17" fill="url(#orb)" stroke="#9db8cc" />
        <path d="M9 10c3-2 5-1.500 8-.5l-1.500 8c-3-1-5.500-1-8 .5z" fill="#f0582a" />
        <path d="M18.500 10c3 1 6 1 9-.5l-2 8c-3 1.500-5.500 1.500-8.500.5z" fill="#8cc63f" />
        <path d="M7 19.500c3-2 5.500-1.500 8-.5l-1.500 7.500c-3-1-5.500-1-8 .5z" fill="#38a8e8" />
        <path d="M16.500 19.500c3 1 6 1 8.500-.5l-2 8c-3 1.500-5.500 1-8 0z" fill="#fcc824" />
      </svg>
      <svg viewBox="0 0 30 30" className="ml-[29px] size-[30px]">
        <path d="M15 15l-1 15A15 15 0 0 1 2 7.500z" fill="#0f9d58" />
        <path d="M15 8h13.300A15 15 0 0 0 2 7.500l6.500 11z" fill="#db4437" />
        <path d="M14 30l7.500-11.500L15 15l-6.500 3.500z" fill="#0f9d58" />
        <path d="M21.500 18.500L14 30A15 15 0 0 0 28.300 8H15z" fill="#ffcd40" />
        <circle cx="15" cy="15" r="7" fill="#fff" /><circle cx="15" cy="15" r="5.500" fill="#4285f4" />
      </svg>
      <TaskButton className="ml-[18px]" label="LEON_CIECHANO..." icon={
        <svg viewBox="0 0 30 32" className="mr-[7px] h-[32px] w-[28px]"><path d="M2 2h9v26l-8 1z" fill="#f2dc8c" stroke="#b89a40" /><path d="M8 4l4-2v29l-4-3z" fill="#fff4c8" /><path d="M12 2l11 2v23l-11 4z" fill="#f0d078" stroke="#c8a850" strokeWidth=".7" /><path d="M21 22h2v7h-2z" fill="#fff" /></svg>
      } />
      <svg viewBox="0 0 28 26" className="ml-[19px] h-[26px] w-[28px]"><path d="M1 2h19v22H1z" fill="#8cc0e0" stroke="#5a96c0" /><path d="M21.500 2v22M24.500 3v20" stroke="#a8d0ec" strokeWidth="1.500" /><circle cx="10.500" cy="13" r="9" fill="#f07018" stroke="#fff" strokeWidth=".7" /><path d="M7.500 7.500v11l9-5.500z" fill="#fff" /></svg>
      <svg viewBox="0 0 32 32" className="ml-[32px] size-[32px]"><path d="M25.500 20.500A9.500 9.500 0 1 1 26.500 17H9" fill="none" stroke="#4ab8f0" strokeWidth="5" /><path d="M5 29c-6-3 4-24 18-27 6-1 7 2 5 7" fill="none" stroke="#f8d030" strokeWidth="2.600" /></svg>
      <svg viewBox="0 0 30 30" className="ml-[30px] size-[30px]"><defs><clipPath id="ball"><circle cx="15" cy="15" r="14.500" /></clipPath><linearGradient id="stripe" gradientUnits="userSpaceOnUse" x1="0" y1="0" x2="3.200" y2="1.600" spreadMethod="reflect"><stop offset=".1" stopColor="#2a2a2a" /><stop offset=".95" stopColor="#e8e8e8" /></linearGradient></defs><rect width="30" height="30" fill="url(#stripe)" clipPath="url(#ball)" /><circle cx="15" cy="15" r="14.300" fill="none" stroke="#888" /></svg>
      <TaskButton className="ml-[18px]" active label="1 ver1_main_proc..." icon={<BigLogo />} />
      <TaskButton className="ml-[4px]" label="s3 - Paint" icon={
        <svg viewBox="0 0 32 32" className="mr-[3px] size-[32px]"><path d="M14 5c8 0 14 4 13 11s-8 12-14 12c-3 0-2-4-5-5s-7 1-7-4C1 10 7 5 14 5z" fill="#d8ecf8" stroke="#88b4d0" /><circle cx="6" cy="17" r="2.500" fill="#e03030" /><circle cx="11" cy="11.500" r="2.500" fill="#50b840" /><circle cx="17.500" cy="9" r="2.500" fill="#f09820" /><circle cx="14" cy="19" r="2.600" fill="#3878a8" /><path d="M26 6l-9 25-2-1 8-25z" fill="#f08828" /><path d="M23 5l1-5 6 2-2 5z" fill="#c8a070" /></svg>
      } />
      <div className="ml-auto flex items-center text-white">
        <span className="w-[22px] pb-[5px] text-[12px] tracking-[-0.3px]">PL</span>
        <svg viewBox="0 0 16 14" className="mb-[6px] mr-px h-[14px] w-[16px]"><path d="M1 6.500h14v7H1z" fill="#666" stroke="#ccc" /><path d="M3 8.500h10M3 11h10" stroke="#ddd" strokeDasharray="1 1" /><path d="M7 6c0-4 5 0 7-5" fill="none" stroke="#ccc" /></svg>
        <Caret className="ml-[11px] h-[4px] w-[7px] rotate-180" />
        <svg viewBox="0 0 16 14" className="ml-[13px] h-[14px] w-[16px]"><path d="M0 5h2.500L6.500 1v12L2.500 9.500H0z" fill="#fff" /><path d="M8.500 5c1 1.500 1 3 0 4.500M10.500 3.500c1.800 2 1.800 5 0 7M12.500 2c2.500 3 2.500 7 0 10" fill="none" stroke="#fff" /></svg>
        <svg viewBox="0 0 16 16" className="ml-[9px] size-4"><path d="M1 1v4h3V1M2.500 5v9h4" fill="none" stroke="#fff" strokeWidth="1.400" /><path d="M5.500 3.500h9v8h-9z" fill="#2a4a70" stroke="#fff" strokeWidth="1.300" /><path d="M7 8l7 7M14 8l-7 7" stroke="#e01818" strokeWidth="2.400" /></svg>
        <svg viewBox="0 0 16 16" className="ml-[8px] size-4"><path d="M1 1v14" stroke="#fff" strokeWidth="1.500" /><path d="M2.500 2h6v1.500H14V9H9V7.500H2.500z" fill="#fff" /><circle cx="11" cy="11" r="4.500" fill="#d82020" /><path d="M9 9l4 4M13 9l-4 4" stroke="#fff" strokeWidth="1.400" /></svg>
        <div className="ml-[16px] w-[60px] text-center text-[12px] leading-[17px] tracking-[-0.4px]"><div>20:39</div><div>2017-12-21</div></div>
        <div className="ml-[12px] h-[38px] w-[13px] border border-[#6f8fae] bg-[linear-gradient(135deg,#7f9dba,#1f3f64_50%,#24486e)]" />
      </div>
    </footer>
  );
}

export default function App() {
  return (
    <div className="flex h-[1080px] w-[1920px] flex-col overflow-hidden bg-[#94b5e6]">
      <TitleBar />
      <MenuBar />
      <Toolbar />
      <main className="flex h-[782px] shrink-0 pl-px">
        <Toolbox />
        <div className="ml-[6px] flex w-[522px] flex-col gap-[5px]">
          <Structure />
          <Properties />
        </div>
        <div className="ml-[6px]"><SlideEditor /></div>
      </main>
      <div className="mt-[5px] flex shrink-0 flex-col"><Output /></div>
      <div className={`flex h-[21px] shrink-0 items-center pl-[2px] pt-[4px] text-[12px] tracking-[-0.2px] text-black ${UI}`}>
        <span>Ready</span>
        <span className="ml-auto mr-[35px] flex h-[16px] w-[37px] items-center justify-center border-x border-[#d0d0d0]">NUM</span>
      </div>
      <Taskbar />
    </div>
  );
}
